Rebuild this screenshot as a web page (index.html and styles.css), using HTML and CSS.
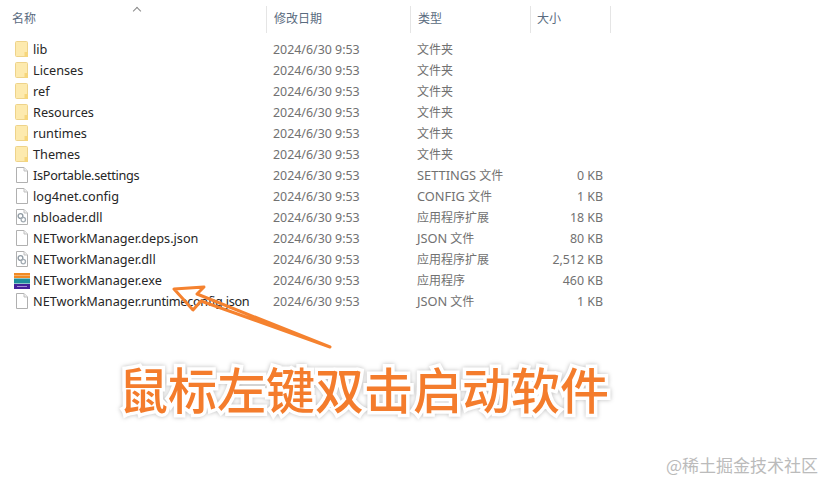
FILE: index.html
```html
<!DOCTYPE html>
<html lang="zh-CN">
<head>
<meta charset="utf-8">
<title>NETworkManager</title>
<link rel="stylesheet" href="styles.css">
</head>
<body>
<svg class="defs" width="0" height="0" aria-hidden="true">
  <symbol id="folder" viewBox="0 0 14 17">
    <path d="M1.5 0.5H11.5Q12.5 .5 12.5 1.5V15.5H1.5Q.5 15.5 .5 14.5V1.5Q.5 .5 1.5 .5Z" fill="#fdeaae" stroke="#eed38a"/>
    <path d="M9.5 11H13V16H9.5Z" fill="#f6d67c"/>
  </symbol>
  <symbol id="file" viewBox="0 0 14 17">
    <path d="M1.5 .5H9L12.5 4V15.5H1.5Z" fill="#fff" stroke="#b0b0b0"/>
    <path d="M9 .5V4H12.5" fill="#f0f0f0" stroke="#c0c0c0"/>
  </symbol>
  <symbol id="dll" viewBox="0 0 14 17">
    <path d="M1.5 .5H9L12.5 4V15.5H1.5Z" fill="#fff" stroke="#b0b0b0"/>
    <path d="M9 .5V4H12.5" fill="#f0f0f0" stroke="#c0c0c0"/>
    <circle cx="5.5" cy="7" r="2.4" fill="none" stroke="#8f9aa3" stroke-width="1.3"/>
    <circle cx="8.3" cy="10.6" r="2.2" fill="none" stroke="#a3acb3" stroke-width="1.3"/>
  </symbol>
  <symbol id="exe" viewBox="0 0 16 16">
    <rect y="0" width="16" height="5" fill="#f08a24"/>
    <rect y="2" width="16" height="1" fill="#f7b26c"/>
    <rect y="5.500" width="16" height="5" fill="#1f8f9c"/>
    <rect y="11" width="16" height="5" fill="#45229a"/>
    <rect x="3" y="13" width="10" height="1" fill="#a591d8"/>
  </symbol>
</svg>

<main class="explorer">
  <div class="row head">
    <div class="cell name sorted">名称</div>
    <div class="cell">修改日期</div>
    <div class="cell">类型</div>
    <div class="cell">大小</div>
  </div>
  <ul class="list">
    <li class="row"><span class="name item"><svg class="ico"><use href="#folder"/></svg>lib</span><span class="meta date">2024/6/30 9:53</span><span class="meta">文件夹</span><span class="size"></span></li>
    <li class="row"><span class="name item"><svg class="ico"><use href="#folder"/></svg>Licenses</span><span class="meta date">2024/6/30 9:53</span><span class="meta">文件夹</span><span class="size"></span></li>
    <li class="row"><span class="name item"><svg class="ico"><use href="#folder"/></svg>ref</span><span class="meta date">2024/6/30 9:53</span><span class="meta">文件夹</span><span class="size"></span></li>
    <li class="row"><span class="name item"><svg class="ico"><use href="#folder"/></svg>Resources</span><span class="meta date">2024/6/30 9:53</span><span class="meta">文件夹</span><span class="size"></span></li>
    <li class="row"><span class="name item"><svg class="ico"><use href="#folder"/></svg>runtimes</span><span class="meta date">2024/6/30 9:53</span><span class="meta">文件夹</span><span class="size"></span></li>
    <li class="row"><span class="name item"><svg class="ico"><use href="#folder"/></svg>Themes</span><span class="meta date">2024/6/30 9:53</span><span class="meta">文件夹</span><span class="size"></span></li>
    <li class="row"><span class="name item"><svg class="ico"><use href="#file"/></svg><span class="tight">IsPortable.settings</span></span><span class="meta date">2024/6/30 9:53</span><span class="meta"><span class="en">SETTINGS</span> 文件</span><span class="size">0 KB</span></li>
    <li class="row"><span class="name item"><svg class="ico"><use href="#file"/></svg>log4net.config</span><span class="meta date">2024/6/30 9:53</span><span class="meta"><span class="en">CONFIG</span> 文件</span><span class="size">1 KB</span></li>
    <li class="row"><span class="name item"><svg class="ico"><use href="#dll"/></svg>nbloader.dll</span><span class="meta date">2024/6/30 9:53</span><span class="meta">应用程序扩展</span><span class="size">18 KB</span></li>
    <li class="row"><span class="name item"><svg class="ico"><use href="#file"/></svg>NETworkManager.deps.json</span><span class="meta date">2024/6/30 9:53</span><span class="meta"><span class="en">JSON</span> 文件</span><span class="size">80 KB</span></li>
    <li class="row"><span class="name item"><svg class="ico"><use href="#dll"/></svg>NETworkManager.dll</span><span class="meta date">2024/6/30 9:53</span><span class="meta">应用程序扩展</span><span class="size">2,512 KB</span></li>
    <li class="row"><span class="name item"><svg class="ico exe"><use href="#exe"/></svg>NETworkManager.exe</span><span class="meta date">2024/6/30 9:53</span><span class="meta">应用程序</span><span class="size">460 KB</span></li>
    <li class="row"><span class="name item"><svg class="ico"><use href="#file"/></svg>NETworkManager.<span class="tight">runtimeconfig.json</span></span><span class="meta date">2024/6/30 9:53</span><span class="meta"><span class="en">JSON</span> 文件</span><span class="size">1 KB</span></li>
  </ul>
</main>

<svg class="arrow" width="824" height="481" viewBox="0 0 824 481" aria-hidden="true">
  <path d="M174 289 L204 287 L197 294 L330 347 L201 301 L193 310 Z" fill="none" stroke="#f5822f" stroke-width="3" stroke-linejoin="round"/>
</svg>
<div class="callout">鼠标左键双击启动软件</div>
<div class="mark">@稀土掘金技术社区</div>
</body>
</html>
```
FILE: styles.css
```css
* { box-sizing: border-box; }
html, body { margin: 0; padding: 0; }
body {
  position: relative;
  width: 824px;
  height: 481px;
  overflow: hidden;
  background: #fff;
  font-family: "Noto Sans", "Noto Sans CJK SC", sans-serif;
  font-size: 12px;
}
.defs { position: absolute; }
.explorer { padding: 6px 0 0 0; width: 611px; }
.row {
  display: grid;
  grid-template-columns: 266px 144px 120px 81px;
  align-items: center;
}
.head { height: 27px; color: #5a6b80; }
.head .cell {
  height: 27px;
  line-height: 25px;
  padding-left: 7px;
  border-left: 1px solid #e5e5e5;
}
.head .cell:last-child { border-right: 1px solid #e5e5e5; padding-left: 6px; }
.head .name { padding-left: 12px; border-left: 0; }
.sorted { position: relative; }
.sorted::before {
  content: "";
  position: absolute;
  left: 134px;
  top: 2px;
  width: 5px;
  height: 5px;
  border-left: 1px solid #8a8a8a;
  border-top: 1px solid #8a8a8a;
  transform: rotate(45deg);
}
.list { list-style: none; margin: 6px 0 0; padding: 0; }
.list .row { height: 21px; line-height: 21px; }
.item {
  display: flex;
  align-items: center;
  padding-left: 15px;
  color: #262626;
  font-size: 12.700px;
  white-space: nowrap;
}
.tight { letter-spacing: -0.280px; }
.ico { width: 14px; height: 17px; margin-right: 4px; flex: none; }
.ico.exe { width: 16px; height: 16px; margin-left: -1px; margin-right: 3px; }
.meta { padding-left: 7px; color: #717171; white-space: nowrap; }
.date { font-size: 12.400px; }
.en { font-size: 12.800px; }
.size { padding-right: 8px; color: #717171; font-size: 12.400px; text-align: right; white-space: nowrap; }
.arrow { position: absolute; left: 0; top: 0; }
.callout {
  position: absolute;
  left: 119px;
  top: 348px;
  font-family: "Noto Sans CJK SC", sans-serif;
  font-size: 49px;
  line-height: 80px;
  font-weight: 500;
  white-space: nowrap;
  color: #f47c2c;
  -webkit-text-stroke: 7px #fff;
  paint-order: stroke fill;
  filter: drop-shadow(0 0 2px #bdbdbd);
}
.mark {
  position: absolute;
  right: 6px;
  top: 455px;
  font-family: "Noto Sans CJK SC", sans-serif;
  font-size: 17px;
  line-height: 20px;
  color: #bbbbbb;
  white-space: nowrap;
}
```
